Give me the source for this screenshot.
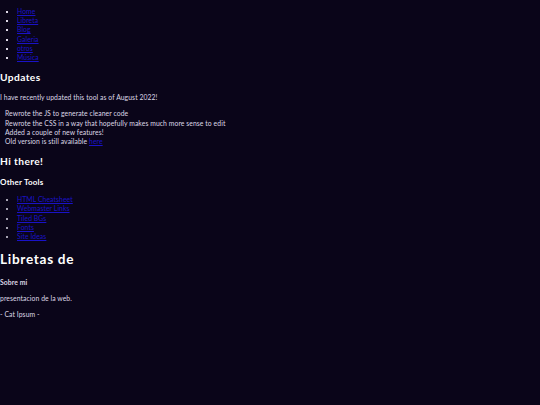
export default function App() {
  const nav = ["Home", "Libreta", "Blog", "Galeria", "otros", "Música"];
  const tools = ["HTML Cheatsheet", "Webmaster Links", "Tiled BGs", "Fonts", "Site Ideas"];
  const updates = [
    "Rewrote the JS to generate cleaner code",
    "Rewrote the CSS in a way that hopefully makes much more sense to edit",
    "Added a couple of new features!",
  ];

  return (
    <div className="min-h-[405px] bg-[#0a0519] text-[#ddd8e6] font-['Lato','Noto_Sans',sans-serif] text-[6.8px] leading-[1.364] tracking-[0.08px] flow-root">
      {/* nav */}
      <ul className="my-[6.8px] pl-[17px] list-[square] marker:text-[#ddd8e6]">
        {nav.map((n) => (
          <li key={n}>
            <a href="#" className="text-[#1a12c8] underline">
              {n}
            </a>
          </li>
        ))}
      </ul>

      <h2 className="text-[10.2px] font-bold text-white tracking-[0.4px] mt-[8.5px] mb-[8.5px]">Updates</h2>
      <p className="my-[6.8px]">I have recently updated this tool as of August 2022!</p>
      <ul className="my-[6.8px] pl-[5px]">
        {updates.map((u) => (
          <li key={u}>{u}</li>
        ))}
        <li>
          Old version is still available{" "}
          <a href="#" className="text-[#1a12c8] underline">
            here
          </a>
        </li>
      </ul>

      <h2 className="text-[10.2px] font-bold text-white tracking-[0.4px] mt-[8.5px] mb-[8.5px]">Hi there!</h2>
      <h3 className="text-[8px] font-bold text-white tracking-[0.2px] mt-[8px] mb-[6.8px]">Other Tools</h3>
      <ul className="my-[6.8px] pl-[17px] list-disc">
        {tools.map((t) => (
          <li key={t}>
            <a href="#" className="text-[#1a12c8] underline">
              {t}
            </a>
          </li>
        ))}
      </ul>

      <h1 className="text-[13.6px] font-bold text-white tracking-[0.7px] mt-[9.1px] mb-[9.1px]">Libretas de</h1>
      <h4 className="text-[6.8px] font-bold text-[#ddd8e6] my-[7px]">Sobre mi</h4>
      <p className="my-[6.8px]">presentacion de la web.</p>
      <p className="my-[6.8px]">- Cat Ipsum -</p>
    </div>
  );
}
